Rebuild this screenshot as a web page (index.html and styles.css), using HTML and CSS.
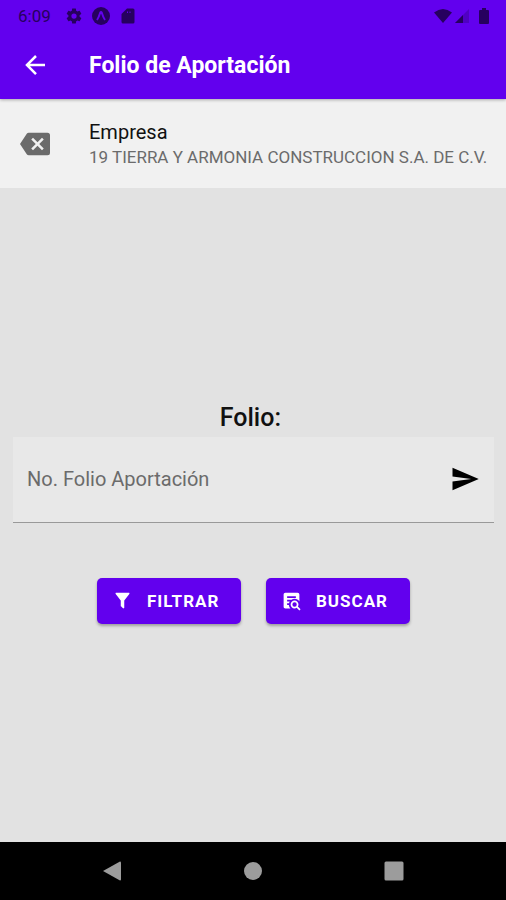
FILE: index.html
```html
<!DOCTYPE html>
<html lang="es">
<head>
<meta charset="utf-8">
<meta name="viewport" content="width=device-width, initial-scale=1">
<title>Folio de Aportación</title>
<link rel="stylesheet" href="styles.css">
</head>
<body>
<div class="screen">
  <header class="top">
    <div class="status">
      <span class="clock">6:09</span>
      <svg class="status-icon" viewBox="0 0 24 24" aria-hidden="true"><path d="M12,15.5A3.5,3.5 0 0,1 8.500,12A3.5,3.5 0 0,1 12,8.500A3.5,3.5 0 0,1 15.500,12A3.500,3.500 0 0,1 12,15.500M19.430,12.970C19.470,12.650 19.500,12.330 19.500,12C19.500,11.670 19.470,11.340 19.430,11L21.540,9.370C21.730,9.220 21.780,8.950 21.660,8.730L19.660,5.270C19.540,5.050 19.270,4.960 19.050,5.050L16.560,6.050C16.040,5.660 15.500,5.320 14.870,5.070L14.500,2.420C14.460,2.180 14.250,2 14,2H10C9.750,2 9.540,2.180 9.500,2.420L9.130,5.070C8.500,5.320 7.960,5.660 7.440,6.050L4.950,5.050C4.730,4.960 4.460,5.050 4.340,5.270L2.340,8.730C2.210,8.950 2.270,9.220 2.460,9.370L4.570,11C4.530,11.340 4.500,11.670 4.500,12C4.500,12.330 4.530,12.650 4.570,12.970L2.460,14.630C2.270,14.780 2.210,15.050 2.340,15.270L4.340,18.730C4.460,18.950 4.730,19.030 4.950,18.950L7.440,17.940C7.960,18.340 8.500,18.680 9.130,18.930L9.500,21.580C9.540,21.820 9.750,22 10,22H14C14.250,22 14.460,21.820 14.500,21.580L14.870,18.930C15.500,18.670 16.040,18.340 16.560,17.940L19.050,18.950C19.270,19.030 19.540,18.950 19.660,18.730L21.660,15.270C21.780,15.050 21.730,14.780 21.540,14.630L19.430,12.970Z"/></svg>
      <svg class="status-icon" viewBox="0 0 18 18" aria-hidden="true"><circle cx="9" cy="9" r="9"/><path class="status-mark" d="M5 13C6.500 11 7.500 8 8.300 5.500Q9 4.300 9.700 5.500C10.500 8 11.500 11 13 13"/></svg>
      <svg class="status-icon" viewBox="0 0 18 18" aria-hidden="true"><path fill-rule="evenodd" d="M8 1.500H14Q15.500 1.500 15.500 3V15Q15.500 16.500 14 16.500H4Q2.500 16.500 2.500 15V7ZM8 4.500V6H9V4.500ZM10.500 4.500V6H11.500V4.500Z"/></svg>
      <span class="spacer"></span>
      <svg class="status-icon wifi" viewBox="0 0 20 16" aria-hidden="true"><path d="M1 4.500Q10-2.500 19 4.500L10 15Z"/></svg>
      <svg class="status-icon signal" viewBox="0 0 16 16" aria-hidden="true"><path opacity=".3" d="M1 15L15 1V15Z"/><path d="M1 15L9 7V15Z"/></svg>
      <svg class="status-icon battery" viewBox="0 0 10 16" aria-hidden="true"><path d="M3 0H7V2H9Q10 2 10 3V15Q10 16 9 16H1Q0 16 0 15V3Q0 2 1 2H3Z"/></svg>
    </div>
    <div class="appbar">
      <button class="icon-button" type="button" aria-label="Volver"><svg class="icon" viewBox="0 0 24 24" aria-hidden="true"><path d="M20,11V13H8L13.500,18.500L12.080,19.920L4.160,12L12.080,4.080L13.500,5.500L8,11H20Z"/></svg></button>
      <h1 class="title">Folio de Aportación</h1>
    </div>
  </header>

  <section class="company">
    <button class="icon-button clear" type="button" aria-label="Quitar empresa"><svg class="icon" viewBox="0 0 24 24" aria-hidden="true"><path d="M22,3H7C6.310,3 5.770,3.350 5.410,3.880L0,12L5.410,20.110C5.770,20.640 6.310,21 7,21H22A2,2 0 0,0 24,19V5A2,2 0 0,0 22,3M19,15.590L17.590,17L14,13.410L10.410,17L9,15.590L12.590,12L9,8.410L10.410,7L14,10.590L17.590,7L19,8.410L15.410,12"/></svg></button>
    <div class="company-text">
      <h2 class="company-label">Empresa</h2>
      <p class="company-name">19 TIERRA Y ARMONIA CONSTRUCCION S.A. DE C.V.</p>
    </div>
  </section>

  <main class="content">
    <form class="form">
      <label class="form-label" for="folio">Folio:&nbsp;</label>
      <div class="field">
        <input class="field-input" id="folio" type="text" placeholder="No. Folio Aportación">
        <button class="icon-button send" type="button" aria-label="Enviar"><svg class="icon" viewBox="0 0 24 24" aria-hidden="true"><path d="M2,21L23,12L2,3V10L17,12L2,14V21Z"/></svg></button>
      </div>
      <div class="actions">
        <button class="action" type="button"><svg class="action-icon" viewBox="0 0 24 24" aria-hidden="true"><path d="M14,12V19.880C14.040,20.180 13.940,20.500 13.710,20.710C13.320,21.100 12.690,21.100 12.300,20.710L10.290,18.700C10.060,18.470 9.960,18.160 10,17.870V12H9.970L4.210,4.620C3.870,4.190 3.950,3.560 4.380,3.220C4.570,3.080 4.780,3 5,3H19C19.220,3 19.430,3.080 19.620,3.220C20.050,3.560 20.130,4.190 19.790,4.620L14.030,12H14Z"/></svg>FILTRAR</button>
        <button class="action" type="button"><svg class="action-icon" viewBox="0 0 24 24" aria-hidden="true"><path d="M15.500,12C18,12 20,14 20,16.500C20,17.380 19.750,18.210 19.310,18.900L22.390,22L21,23.390L17.880,20.320C17.190,20.750 16.370,21 15.500,21C13,21 11,19 11,16.500C11,14 13,12 15.500,12M15.500,14A2.500,2.500 0 0,0 13,16.500A2.500,2.500 0 0,0 15.500,19A2.500,2.500 0 0,0 18,16.500A2.500,2.500 0 0,0 15.500,14M7,15V17H9C9.140,18.550 9.800,19.940 10.810,21H5C3.890,21 3,20.100 3,19V5C3,3.890 3.890,3 5,3H19A2,2 0 0,1 21,5V13.030C19.850,11.210 17.820,10 15.500,10C14.230,10 13.040,10.370 12.040,11H7V13H10C9.640,13.600 9.350,14.270 9.180,15H7M17,9V7H7V9H17Z"/></svg>BUSCAR</button>
      </div>
    </form>
  </main>

  <nav class="navbar" aria-label="Sistema">
    <button class="nav-button" type="button" aria-label="Atrás"><svg viewBox="0 0 24 24" aria-hidden="true"><path d="M3 12L20 2.500Q21 2.500 21 3.500V20.500Q21 21.500 20 21.500Z"/></svg></button>
    <button class="nav-button" type="button" aria-label="Inicio"><svg viewBox="0 0 24 24" aria-hidden="true"><circle cx="12" cy="12" r="9"/></svg></button>
    <button class="nav-button" type="button" aria-label="Recientes"><svg viewBox="0 0 24 24" aria-hidden="true"><rect x="2.500" y="2.500" width="19" height="19" rx="1.500"/></svg></button>
  </nav>
</div>
</body>
</html>
```
FILE: styles.css
```css
* {
  box-sizing: border-box;
}

body {
  margin: 0;
  font-family: Roboto, "Liberation Sans", sans-serif;
  color: #111;
  background: #e2e2e2;
}

h1,
h2,
p {
  margin: 0;
}

button {
  padding: 0;
  border: 0;
  background: none;
  font-family: inherit;
  color: inherit;
}

svg {
  display: block;
  fill: currentColor;
}

.screen {
  display: flex;
  flex-direction: column;
  min-height: 100vh;
}

.top {
  position: relative;
  background: #6200ee;
  box-shadow: 0 1px 3px rgba(0, 0, 0, 0.3);
}

.status {
  display: flex;
  align-items: center;
  gap: 9px;
  height: 31px;
  padding: 0 17px 0 18px;
  color: #27005f;
}

.clock {
  margin-right: 5px;
  font-size: 17px;
}

.status-icon {
  width: 18px;
  height: 18px;
}

.status-mark {
  fill: none;
  stroke: #6200ee;
  stroke-width: 2;
}

.spacer {
  flex: 1;
}

.wifi {
  width: 20px;
  height: 16px;
}

.signal {
  width: 16px;
  height: 16px;
  margin-left: -8px;
}

.battery {
  width: 10px;
  height: 16px;
}

.appbar {
  display: flex;
  align-items: center;
  gap: 39px;
  height: 68px;
  padding: 0 20px;
  color: #fff;
}

.icon-button {
  flex: none;
}

.icon {
  width: 30px;
  height: 30px;
}

.title {
  padding-top: 2px;
  font-size: 23px;
  font-weight: 700;
  line-height: 30px;
}

.company {
  display: flex;
  align-items: center;
  gap: 39px;
  height: 89px;
  padding: 0 10px 0 20px;
  background: #f1f1f1;
}

.clear {
  color: #6b6b6b;
}

.company-text {
  min-width: 0;
  white-space: nowrap;
}

.company-label {
  font-size: 20px;
  font-weight: 400;
  line-height: 26px;
}

.company-name {
  font-size: 17px;
  line-height: 24px;
  color: #6b6b6b;
}

.content {
  display: flex;
  flex: 1;
  flex-direction: column;
  justify-content: center;
  padding: 0 12px 0 13px;
}

.form {
  display: flex;
  flex-direction: column;
}

.form-label {
  font-size: 25px;
  font-weight: 500;
  line-height: 38px;
  text-align: center;
}

.field {
  display: flex;
  align-items: center;
  height: 86px;
  padding: 0 14px;
  background: #e8e8e8;
  border-bottom: 1px solid #999;
}

.field-input {
  flex: 1;
  min-width: 0;
  padding: 0;
  border: 0;
  outline: 0;
  background: none;
  font: 20px/30px Roboto, "Liberation Sans", sans-serif;
  color: #111;
}

.field-input::placeholder {
  color: #6b6b6b;
  opacity: 1;
}

.send {
  color: #000;
}

.actions {
  display: flex;
  justify-content: center;
  gap: 25px;
  padding: 55px 0 8px;
}

.action {
  display: flex;
  align-items: center;
  gap: 14px;
  width: 144px;
  height: 46px;
  padding: 0 15px;
  border-radius: 5px;
  background: #6200ee;
  box-shadow: 0 2px 3px rgba(0, 0, 0, 0.3);
  font-size: 17px;
  font-weight: 700;
  letter-spacing: 1px;
  color: #fff;
}

.action-icon {
  width: 21px;
  height: 21px;
}

.navbar {
  display: flex;
  align-items: center;
  justify-content: center;
  gap: 117px;
  height: 58px;
  background: #000;
  color: #9c9c9c;
}

.nav-button {
  width: 24px;
  height: 24px;
}
```
